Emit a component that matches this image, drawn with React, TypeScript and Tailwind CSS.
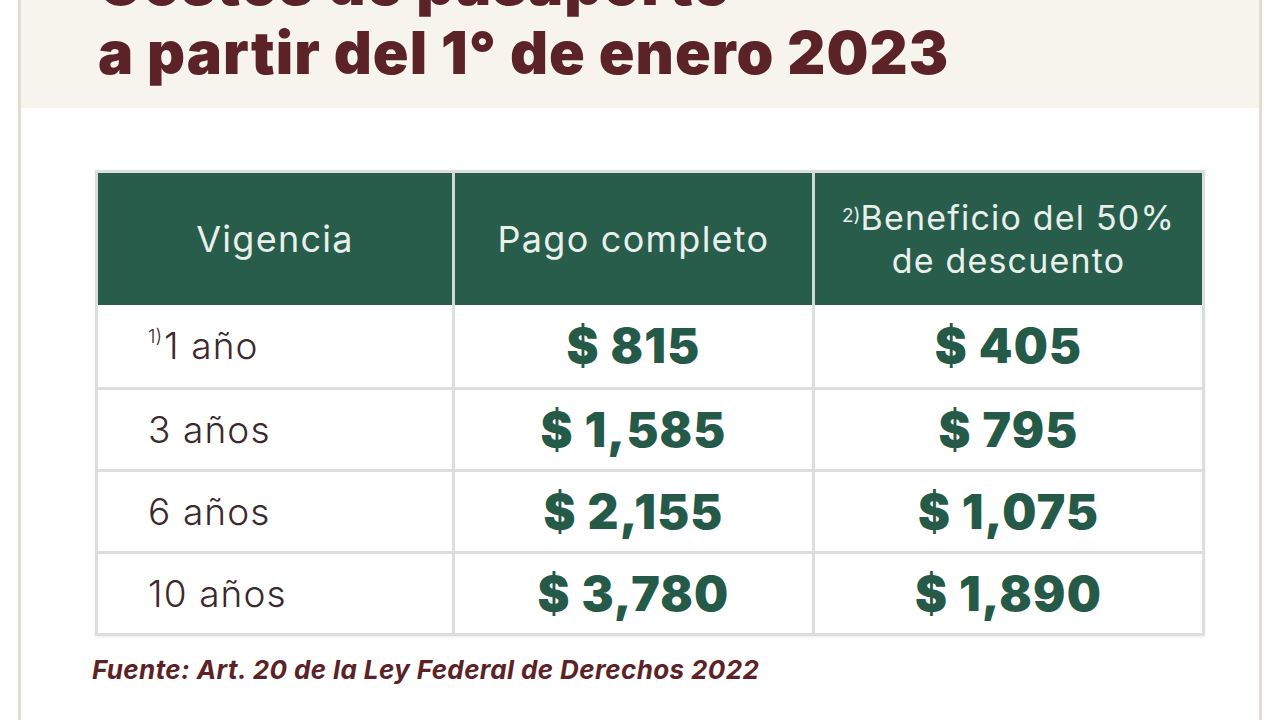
import React from 'react';

const rows = [
  { label: '1 año', note: '1)', full: '$ 815', half: '$ 405' },
  { label: '3 años', full: '$ 1,585', half: '$ 795' },
  { label: '6 años', full: '$ 2,155', half: '$ 1,075' },
  { label: '10 años', full: '$ 3,780', half: '$ 1,890' },
];

export default function App() {
  return (
    <div className="h-[720px] w-[1280px] overflow-hidden bg-white" style={{ fontFamily: 'Inter, "Noto Sans", sans-serif' }}>
      <div className="mx-[18px] h-full border-x-[3px] border-[#e3dcd1] bg-white">
        {/* title band */}
        <div className="flex h-[108px] flex-col justify-end overflow-hidden bg-[#f7f4ee] pb-[21px] pl-[77px]">
          <h1 className="text-[59px] font-black leading-[69px] tracking-[0.018em] text-[#5b2327]">
            Costos de pasaporte
            <br />
            a partir del 1° de enero 2023
          </h1>
        </div>

        {/* table */}
        <div className="ml-[74px] mt-[62px] w-[1110px] border-[3px] border-[#dcdedd] shadow-[0_1px_3px_rgba(0,0,0,0.08)]">
          <div className="grid h-[132px] grid-cols-[357px_360px_387px] bg-[#285c4b] text-[#e8f0ec]">
            <div className="flex items-center justify-center border-r-[3px] border-[#cfd9d5] text-[36px] font-normal tracking-[0.035em]">
              Vigencia
            </div>
            <div className="flex items-center justify-center border-r-[3px] border-[#cfd9d5] text-[36px] font-normal tracking-[0.035em]">
              Pago completo
            </div>
            <div className="flex flex-col items-center justify-center text-center text-[34px] font-normal leading-[43px] tracking-[0.035em]">
              <span>
                <sup className="relative top-[-8px] text-[19px] tracking-normal">2)</sup>Beneficio del 50%
              </span>
              <span>de descuento</span>
            </div>
          </div>
          {rows.map((r, i) => (
            <div
              key={r.label}
              className={`grid h-[82px] grid-cols-[357px_360px_387px] ${i > 0 ? 'border-t-[3px] border-[#dcdedd]' : ''}`}
            >
              <div className="flex items-center border-r-[3px] border-[#dcdedd] pl-[50px] text-[37px] font-light tracking-[0.03em] text-[#3b2a2d]">
                {r.note && <sup className="relative top-[-9px] mr-[2px] text-[19px] tracking-normal">{r.note}</sup>}
                {r.label}
              </div>
              <div className="flex items-center justify-center border-r-[3px] border-[#dcdedd] text-[48px] font-black tracking-[0.025em] text-[#265a48]">
                {r.full}
              </div>
              <div className="flex items-center justify-center text-[48px] font-black tracking-[0.025em] text-[#265a48]">
                {r.half}
              </div>
            </div>
          ))}
        </div>

        <p className="ml-[71px] mt-[14px] text-[26px] font-bold italic tracking-[0.015em] text-[#5b2327]">
          Fuente: Art. 20 de la Ley Federal de Derechos 2022
        </p>
      </div>
    </div>
  );
}
